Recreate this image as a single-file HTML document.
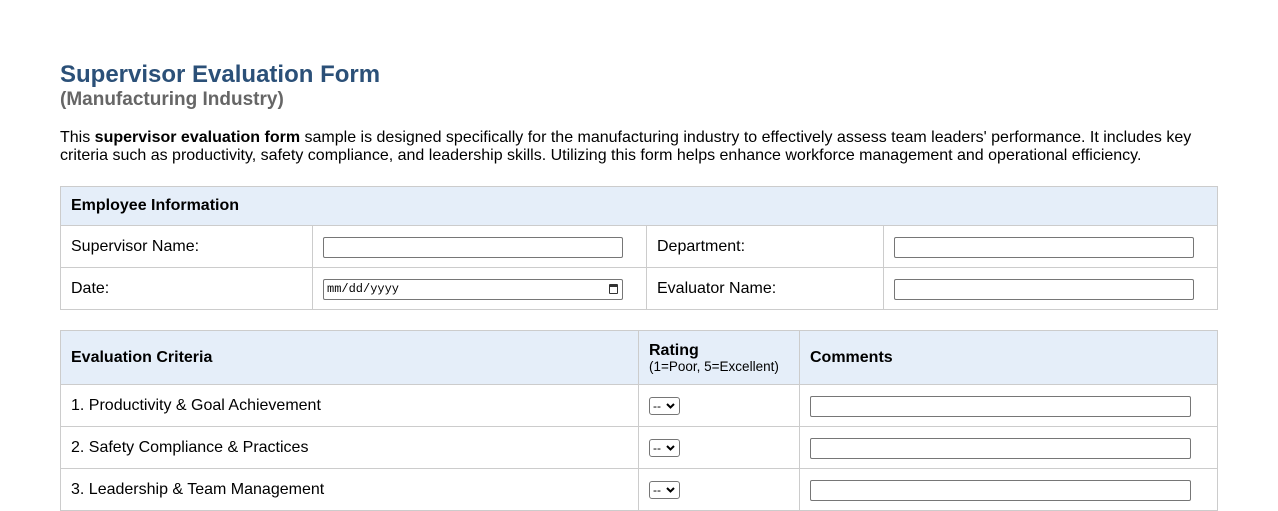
<!DOCTYPE html>
<html><head><style>
body{margin:0;background:#fff;font-family:"Liberation Sans",Arial,sans-serif;color:#000;width:1278px;height:501px;overflow:hidden;position:relative}
h1{position:absolute;left:60px;top:61px;margin:0;font-size:24px;color:#2b5078;font-weight:bold}
h2{position:absolute;left:60px;top:89px;margin:0;font-size:19px;color:#666;font-weight:bold}
p{position:absolute;left:60px;top:129px;margin:0;font-size:16px;line-height:18px;width:1160px}
table{position:absolute;left:60px;width:1157px;border-collapse:collapse;font-size:16px;table-layout:fixed}
td,th{border:1px solid #ccc;padding:0 10px;text-align:left;vertical-align:middle}
td{padding-top:1px}
th{background:#e5eef9;font-weight:bold}
.t1{top:186px}
.t2{top:330px}
.inp{display:block;width:298px;border:1px solid #767676;border-radius:2px;box-sizing:border-box;height:21px;font-family:"Liberation Mono",monospace;font-size:12px;padding-left:3px;line-height:19px;position:relative}
.sel{display:inline-block;width:31px;height:18px;border:1px solid #767676;border-radius:3px;box-sizing:border-box;font-size:12px;line-height:16px;padding-left:3px;position:relative}
.sel svg{position:absolute;right:4px;top:5px}
</style></head><body>
<h1>Supervisor Evaluation Form</h1>
<h2>(Manufacturing Industry)</h2>
<p>This <b>supervisor evaluation form</b> sample is designed specifically for the manufacturing industry to effectively assess team leaders' performance. It includes key criteria such as productivity, safety compliance, and leadership skills. Utilizing this form helps enhance workforce management and operational efficiency.</p>
<table class="t1">
<colgroup><col style="width:252px"><col style="width:334px"><col style="width:237px"><col style="width:334px"></colgroup>
<tr style="height:39px"><th colspan="4">Employee Information</th></tr>
<tr style="height:42px"><td>Supervisor Name:</td><td><span class="inp" style="width:300px"></span></td><td>Department:</td><td><span class="inp" style="width:300px"></span></td></tr>
<tr style="height:42px"><td>Date:</td><td><span class="inp" style="width:300px">mm/dd/yyyy<span style="position:absolute;right:4px;top:4px;width:9px;height:10px;border:1.5px solid #333;border-top-width:3px;border-radius:1px;box-sizing:border-box"></span></span></td><td>Evaluator Name:</td><td><span class="inp" style="width:300px"></span></td></tr>
</table>
<table class="t2">
<colgroup><col style="width:578px"><col style="width:161px"><col style="width:418px"></colgroup>
<tr style="height:54px"><th>Evaluation Criteria</th><th style="line-height:16px;padding-top:3px">Rating<br><span style="font-weight:normal;font-size:13.5px">(1=Poor, 5=Excellent)</span></th><th>Comments</th></tr>
<tr style="height:42px"><td>1. Productivity &amp; Goal Achievement</td><td><span class="sel">--<svg width="9" height="6" viewBox="0 0 9 6"><path d="M1 1L4.5 4.5L8 1" stroke="#000" stroke-width="2" fill="none"/></svg></span></td><td><span class="inp" style="width:381px"></span></td></tr>
<tr style="height:42px"><td>2. Safety Compliance &amp; Practices</td><td><span class="sel">--<svg width="9" height="6" viewBox="0 0 9 6"><path d="M1 1L4.5 4.5L8 1" stroke="#000" stroke-width="2" fill="none"/></svg></span></td><td><span class="inp" style="width:381px"></span></td></tr>
<tr style="height:42px"><td>3. Leadership &amp; Team Management</td><td><span class="sel">--<svg width="9" height="6" viewBox="0 0 9 6"><path d="M1 1L4.5 4.5L8 1" stroke="#000" stroke-width="2" fill="none"/></svg></span></td><td><span class="inp" style="width:381px"></span></td></tr>
</table>
</body></html>
